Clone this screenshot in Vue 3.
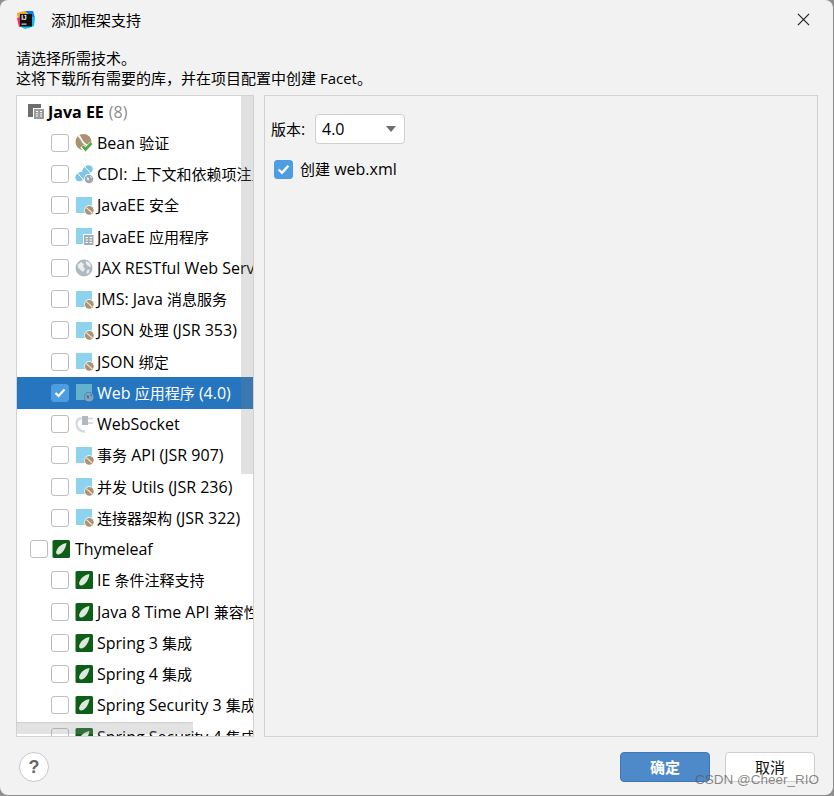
<script setup>
const split = (text) =>
  text.match(/[\u3000-\u303f\u4e00-\u9fff\uff00-\uffef]+|[^\u3000-\u303f\u4e00-\u9fff\uff00-\uffef]+/g).map((t) => ({
    t,
    cjk: /[\u3000-\u303f\u4e00-\u9fff\uff00-\uffef]/.test(t),
  }))

const rows = [
  { label: 'Java EE', count: '(8)', level: 0, icon: 'ee', root: true },
  { label: 'Bean 验证', level: 2, icon: 'bean' },
  { label: 'CDI: 上下文和依赖项注入', level: 2, icon: 'cdi' },
  { label: 'JavaEE 安全', level: 2, icon: 'sq' },
  { label: 'JavaEE 应用程序', level: 2, icon: 'sqee' },
  { label: 'JAX RESTful Web Services', level: 2, icon: 'globe' },
  { label: 'JMS: Java 消息服务', level: 2, icon: 'sq' },
  { label: 'JSON 处理 (JSR 353)', level: 2, icon: 'sq' },
  { label: 'JSON 绑定', level: 2, icon: 'sq' },
  { label: 'Web 应用程序 (4.0)', level: 2, icon: 'web', checked: true, selected: true },
  { label: 'WebSocket', level: 2, icon: 'plug' },
  { label: '事务 API (JSR 907)', level: 2, icon: 'sq' },
  { label: '并发 Utils (JSR 236)', level: 2, icon: 'sq' },
  { label: '连接器架构 (JSR 322)', level: 2, icon: 'sq' },
  { label: 'Thymeleaf', level: 1, icon: 'leaf' },
  { label: 'IE 条件注释支持', level: 2, icon: 'leaf' },
  { label: 'Java 8 Time API 兼容性', level: 2, icon: 'leaf' },
  { label: 'Spring 3 集成', level: 2, icon: 'leaf' },
  { label: 'Spring 4 集成', level: 2, icon: 'leaf' },
  { label: 'Spring Security 3 集成', level: 2, icon: 'leaf' },
  { label: 'Spring Security 4 集成', level: 2, icon: 'leaf' },
].map((r) => ({ ...r, parts: split(r.label) }))
</script>

<template>
  <div class="screen">
    <div class="dialog">
      <header class="titlebar">
        <svg class="logo" width="20" height="20" viewBox="0 0 20 20">
          <path d="M1 3 L9 1 L12 5 L5 10 L2 9 Z" fill="#f9a01a" />
          <path d="M1 8 L6 7 L6 16 L3 17 Z" fill="#fe2857" />
          <path d="M9 1 L17 1 L19 8 L14 6 Z" fill="#087cfa" />
          <path d="M15 6 L19 8 L18 16 L13 18 L9 19 L5 17 L12 10 Z" fill="#07c3f2" />
          <rect x="4" y="4" width="12" height="12.5" fill="#111" />
          <rect x="5.5" y="13.6" width="5" height="1" fill="#fff" />
          <text x="5.3" y="10.4" class="logo-text">IJ</text>
        </svg>
        <span class="title">添加框架支持</span>
        <svg class="close" width="13" height="13" viewBox="0 0 14 14">
          <path d="M1 1 L13 13 M13 1 L1 13" stroke="#222" stroke-width="1.3" fill="none" />
        </svg>
      </header>

      <div class="desc">
        <div>请选择所需技术。</div>
        <div>这将下载所有需要的库，并在项目配置中创建 Facet。</div>
      </div>

      <main class="body">
        <section class="tree">
          <div
            v-for="row in rows"
            :key="row.label"
            class="row"
            :class="['lvl' + row.level, { selected: row.selected, root: row.root }]"
          >
            <span v-if="!row.root" class="cb" :class="{ on: row.checked }">
              <svg v-if="row.checked" width="12" height="10" viewBox="0 0 12 10">
                <path d="M1.5 5 L4.6 8 L10.5 1.5" stroke="#fff" stroke-width="2.2" fill="none" />
              </svg>
            </span>

            <svg v-if="row.icon === 'ee'" class="ic ic-ee" width="16" height="16" viewBox="0 0 16 16">
              <path d="M0 0 H13 V4 H5 V13 H0 Z" fill="#6e6e6e" />
              <rect x="6" y="5" width="10" height="10" fill="#9a9a9a" />
              <path d="M8 7.5 H10 M8 9.8 H10 M8 12 H10 M12 7.5 H14 M12 9.8 H14 M12 12 H14" stroke="#fff" stroke-width="1" />
            </svg>

            <svg v-else-if="row.icon === 'bean'" class="ic" width="18" height="18" viewBox="0 0 18 18">
              <circle cx="8.5" cy="8" r="8" fill="#ad9272" />
              <path d="M3.5 1.5 C7 5 6.5 8 10 10 C12 11 14 13 15 14" stroke="#fff" stroke-width="1.8" fill="none" />
              <path d="M7 12 L10.5 16 L17 9" stroke="#fff" stroke-width="4.4" fill="none" />
              <path d="M7.5 12 L10.5 15.5 L16.5 9" stroke="#4fa83d" stroke-width="2.6" fill="none" />
            </svg>

            <svg v-else-if="row.icon === 'cdi'" class="ic" width="19" height="19" viewBox="0 0 19 19">
              <ellipse cx="12.5" cy="5" rx="5.6" ry="4.4" fill="#7bc6e6" transform="rotate(-35 12.5 5)" />
              <ellipse cx="5.5" cy="11.5" rx="5.6" ry="4.4" fill="#7bc6e6" transform="rotate(-35 5.5 11.5)" />
              <path d="M9.5 1.5 L15.5 8 M2.5 8 L8.5 15" stroke="#fff" stroke-width="1" />
              <circle cx="14" cy="14" r="5" fill="#fff" />
              <circle cx="14" cy="14" r="4.3" fill="#9aa7b0" />
              <path d="M11.5 12 L14 13 L14 15.5 L12 15 Z M15 10.5 L17.5 12.5 L16 13.5 Z" fill="#e4e8eb" />
            </svg>

            <svg v-else-if="row.icon === 'sq'" class="ic" width="19" height="19" viewBox="0 0 19 19">
              <rect x="1" y="1" width="16" height="16" fill="#8ed3ee" />
              <circle cx="14.3" cy="14.3" r="5" fill="#fff" />
              <circle cx="14.3" cy="14.3" r="4.4" fill="#ad9272" />
              <path d="M11.3 11.6 L17.2 17" stroke="#f0e8dd" stroke-width="1.1" />
            </svg>

            <svg v-else-if="row.icon === 'sqee'" class="ic" width="19" height="19" viewBox="0 0 19 19">
              <rect x="1" y="1" width="16" height="16" fill="#8ed3ee" />
              <rect x="8" y="7" width="11" height="11" fill="#fff" />
              <rect x="9" y="8" width="9.5" height="10" fill="#a3adb5" />
              <path d="M10.5 10.5 H13 M10.5 13 H13 M10.5 15.5 H13 M14.5 10.5 H17 M14.5 13 H17 M14.5 15.5 H17" stroke="#fff" stroke-width="1" />
            </svg>

            <svg v-else-if="row.icon === 'globe'" class="ic" width="18" height="18" viewBox="0 0 18 18">
              <circle cx="9" cy="9" r="8.5" fill="#aeb9c0" />
              <path d="M2.5 6 L6 3 L9 5 L8 7 L10 10 L8 13 L5.5 11 L3.5 9 Z M11 2 L15 4 L16 8 L13 7 L11 5 Z M12 11 L15 10.5 L13 15 L11.5 14 Z" fill="#eceff1" />
            </svg>

            <svg v-else-if="row.icon === 'web'" class="ic" width="19" height="19" viewBox="0 0 19 19">
              <rect x="1" y="1" width="16" height="16" fill="#62b1cf" />
              <circle cx="14" cy="14" r="5" fill="#2675bf" />
              <circle cx="14" cy="14" r="4.6" fill="#8aa2b5" />
              <path d="M11.5 12 L14 13 L14 15.5 L12 15 Z M15 10.5 L17.5 12.5 L16 13.5 Z" fill="#2a76b8" />
            </svg>

            <svg v-else-if="row.icon === 'plug'" class="ic" width="18" height="18" viewBox="0 0 18 18">
              <path d="M6.5 3 C2.5 4 1 7 1.8 10.5 C2.5 14 5.5 16.5 10 16.5" stroke="#d5dade" stroke-width="2.4" fill="none" />
              <path d="M7 1 H13 V10 H7 Z" fill="#aeb9c0" />
              <path d="M13 3.5 H18 M13 8 H18" stroke="#ced4d8" stroke-width="1.6" />
            </svg>

            <svg v-else-if="row.icon === 'leaf'" class="ic" width="18" height="18" viewBox="0 0 18 18">
              <rect x="0.5" y="0" width="17.5" height="18" rx="1.5" fill="#0d5f17" />
              <path d="M14.5 3 C9.5 4 5.5 7 4.2 11.5 C3.8 13.5 5 14.8 6.5 14.5 C10.5 13.5 13.5 9 14.5 3 Z" fill="#dfe8df" />
            </svg>

            <span class="label">
              <span v-for="(p, i) in row.parts" :key="i" :class="{ cjk: p.cjk }">{{ p.t }}</span>
              <span v-if="row.count" class="count">{{ row.count }}</span>
            </span>
          </div>
          <div class="vbar"></div>
          <div class="hbar"></div>
        </section>

        <section class="detail">
          <div class="version">
            <span class="ver-label"><span class="cjk">版本</span>:</span>
            <div class="select">
              <span>4.0</span>
              <i class="caret"></i>
            </div>
          </div>
          <div class="webxml">
            <span class="cb on cb-big">
              <svg width="13" height="11" viewBox="0 0 12 10">
                <path d="M1.5 5 L4.6 8 L10.5 1.5" stroke="#fff" stroke-width="2.2" fill="none" />
              </svg>
            </span>
            <span><span class="cjk">创建</span> web.xml</span>
          </div>
        </section>
      </main>

      <footer class="footer">
        <span class="help">?</span>
        <div class="actions">
          <button class="btn primary">确定</button>
          <button class="btn">取消</button>
        </div>
      </footer>
      <div class="mark">CSDN @Cheer_RIO</div>
    </div>
  </div>
</template>

<style>
html, body { margin: 0; padding: 0; }
</style>

<style scoped>
.screen {
  width: 834px;
  height: 796px;
  background: #8f8f8f;
  overflow: hidden;
}
.dialog {
  position: relative;
  width: 833px;
  height: 795px;
  box-sizing: border-box;
  background: #f2f2f2;
  border-radius: 8px;
  color: #000;
  font: 15px/20px "Open Sans", "Noto Sans CJK SC", sans-serif;
  display: flex;
  flex-direction: column;
}
.cjk { font-size: 15px; }
.titlebar {
  height: 39px;
  flex: none;
  display: flex;
  align-items: center;
  padding: 0 23px 0 16px;
}
.logo { flex: none; }
.logo-text { font: 700 6.5px "Liberation Sans", sans-serif; fill: #fff; }
.title { margin-left: 15px; flex: 1; }
.desc { padding: 9px 16px 0; height: 47px; box-sizing: border-box; }
.body {
  flex: none;
  height: 642px;
  margin-top: 9px;
  padding: 0 16px;
  display: flex;
  gap: 10px;
}
.tree {
  position: relative;
  width: 238px;
  box-sizing: border-box;
  background: #fff;
  border: 1px solid #d1d1d1;
  overflow: hidden;
  flex: none;
  font-size: 16px;
}
.row {
  position: relative;
  z-index: 1;
  height: 31.25px;
  display: flex;
  align-items: center;
  white-space: nowrap;
}
.lvl0 { padding-left: 11px; }
.lvl1 { padding-left: 13px; }
.lvl2 { padding-left: 34px; }
.cb {
  flex: none;
  width: 18px;
  height: 18px;
  box-sizing: border-box;
  border: 1.5px solid #bdbdbd;
  border-radius: 3px;
  background: #fff;
  display: flex;
  align-items: center;
  justify-content: center;
}
.cb.on { background: #4d9de0; border-color: #4d9de0; }
.ic { flex: none; margin-left: 6px; margin-right: 4px; }
.ic[width="19"] { margin-right: 3px; }
.lvl1 .ic { margin-left: 4px; margin-right: 5px; }
.ic-ee { margin-left: 0; margin-right: 4px; }
.root .label { font-weight: 700; }
.count { font-weight: 400; color: #8c8c8c; margin-left: 5px; }
.selected { background: #2675bf; color: #fff; }
.vbar {
  position: absolute;
  z-index: 2;
  top: 0;
  right: 0;
  width: 12px;
  height: 378px;
  background: rgba(130, 130, 130, 0.24);
}
.hbar {
  position: absolute;
  z-index: 2;
  left: 0;
  bottom: 2px;
  width: 176px;
  height: 11px;
  background: rgba(150, 150, 150, 0.28);
  border-top: 1px solid #cfcfcf;
}
.detail {
  width: 554px;
  box-sizing: border-box;
  border: 1px solid #d1d1d1;
  padding: 18px 6px;
  flex: none;
  font-size: 16px;
}
.version { display: flex; align-items: center; }
.ver-label { width: 44px; flex: none; }
.select {
  width: 90px;
  height: 30px;
  box-sizing: border-box;
  background: #fff;
  border: 1px solid #cfcfcf;
  border-radius: 4px;
  padding: 0 6px;
  display: flex;
  align-items: center;
  justify-content: space-between;
}
.caret {
  width: 0;
  height: 0;
  margin-right: 2px;
  border-left: 5.5px solid transparent;
  border-right: 5.5px solid transparent;
  border-top: 6px solid #6e6e6e;
}
.webxml { display: flex; align-items: center; gap: 7px; margin-top: 15px; padding-left: 3px; }
.cb-big { width: 19px; height: 19px; }
.footer {
  flex: 1;
  display: flex;
  align-items: center;
  justify-content: space-between;
  padding: 2px 18px 0 19px;
}
.help {
  width: 28px;
  height: 28px;
  border: 1px solid #c8c8c8;
  border-radius: 50%;
  background: #fff;
  color: #666;
  font: 700 18px/28px "Liberation Sans", sans-serif;
  text-align: center;
}
.actions { display: flex; gap: 15px; }
.btn {
  width: 90px;
  height: 30px;
  box-sizing: border-box;
  padding: 0;
  background: #fff;
  border: 1px solid #cfcfcf;
  border-radius: 4px;
  color: #111;
  font: inherit;
}
.primary {
  background: #4e89c9;
  border-color: #3b78bb;
  color: #fff;
  font-weight: 700;
}
.mark {
  position: absolute;
  left: 695px;
  top: 771px;
  font: 13.5px/18px "Liberation Sans", sans-serif;
  color: rgba(90, 90, 90, 0.72);
  white-space: nowrap;
  z-index: 3;
}
</style>
